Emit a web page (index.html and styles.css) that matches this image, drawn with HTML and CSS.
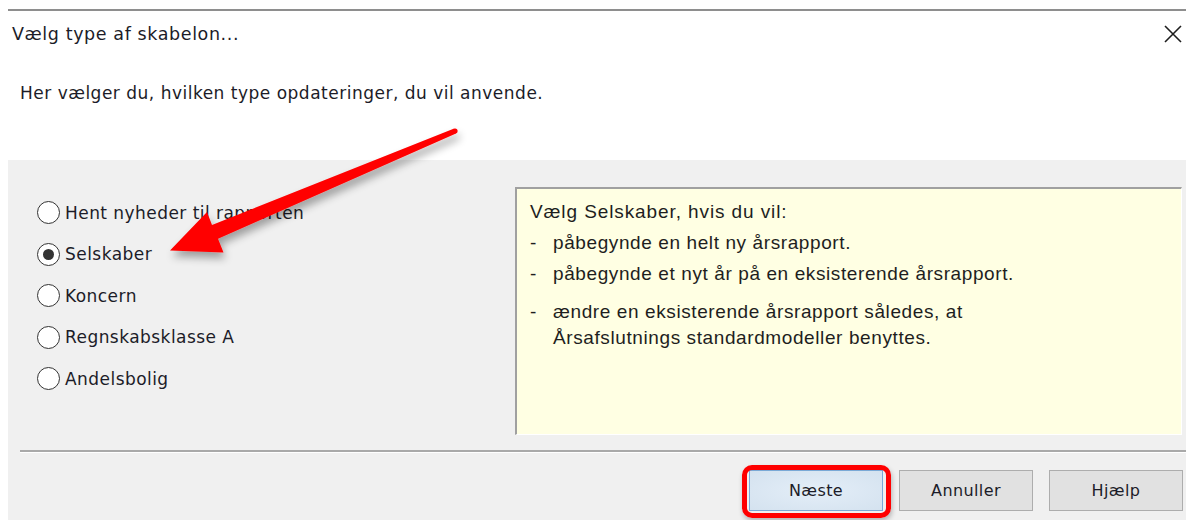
FILE: index.html
```html
<!DOCTYPE html>
<html lang="da">
<head>
<meta charset="utf-8">
<title>Vælg type af skabelon</title>
<link rel="stylesheet" href="styles.css">
</head>
<body>
<div class="dialog">
  <div class="titlebar">
    <span class="title">Vælg type af skabelon...</span>
    <svg class="close" width="20" height="20" viewBox="0 0 20 20" aria-hidden="true">
      <path d="M2 2 L18 18 M18 2 L2 18" stroke="#1e1e1e" stroke-width="1.6" fill="none"/>
    </svg>
  </div>
  <p class="intro">Her vælger du, hvilken type opdateringer, du vil anvende.</p>
  <div class="panel">
    <div class="content">
      <ul class="options">
        <li class="option"><span class="radio"></span><span class="label">Hent nyheder til rapporten</span></li>
        <li class="option"><span class="radio checked"></span><span class="label">Selskaber</span></li>
        <li class="option"><span class="radio"></span><span class="label">Koncern</span></li>
        <li class="option"><span class="radio"></span><span class="label">Regnskabsklasse A</span></li>
        <li class="option"><span class="radio"></span><span class="label">Andelsbolig</span></li>
      </ul>
      <div class="info">
        <p class="info-head">Vælg Selskaber, hvis du vil:</p>
        <ul class="info-list">
          <li class="info-item"><span class="dash">-</span><span>påbegynde en helt ny årsrapport.</span></li>
          <li class="info-item"><span class="dash">-</span><span>påbegynde et nyt år på en eksisterende årsrapport.</span></li>
          <li class="info-item last"><span class="dash">-</span><span>ændre en eksisterende årsrapport således, at<br>Årsafslutnings standardmodeller benyttes.</span></li>
        </ul>
      </div>
    </div>
    <div class="separator"></div>
    <div class="buttons">
      <span class="highlight-wrap">
        <button class="btn btn-default" type="button">Næste</button>
        <span class="highlight"></span>
      </span>
      <button class="btn" type="button">Annuller</button>
      <button class="btn" type="button">Hjælp</button>
    </div>
  </div>
</div>

<!-- callout arrow pointing at the selected option -->
<svg class="callout" width="1186" height="520" viewBox="0 0 1186 520" aria-hidden="true">
  <defs>
    <filter id="arrow-shadow" x="-20%" y="-20%" width="140%" height="160%">
      <feGaussianBlur in="SourceAlpha" stdDeviation="4"/>
      <feOffset dx="2" dy="6" result="blur"/>
      <feComponentTransfer><feFuncA type="linear" slope="0.35"/></feComponentTransfer>
      <feMerge><feMergeNode/><feMergeNode in="SourceGraphic"/></feMerge>
    </filter>
  </defs>
  <g filter="url(#arrow-shadow)" fill="#ff0000">
    <path d="M454.2 128.6 L212 225 L207 212 L170 250.5 L223.5 252.5 L218 238.8 L456 133.4 Z"/>
    <circle cx="455.1" cy="131" r="2.5"/>
  </g>
</svg>
</body>
</html>
```

FILE: styles.css
```css
html, body {
  margin: 0;
  padding: 0;
  background: #ffffff;
}

body {
  position: relative;
  width: 1186px;
  height: 520px;
  overflow: hidden;
  font-family: "DejaVu Sans", "Noto Sans", sans-serif;
  font-size: 17px;
  letter-spacing: 0.5px;
  color: #1c1c28;
}

.dialog {
  margin: 9px 0 0 8px;
}

.titlebar {
  display: flex;
  align-items: center;
  justify-content: space-between;
  height: 46px;
  padding: 0 3px 0 4px;
  border-top: 2px solid #8e8e8e;
}

.title {
  font-size: 17.5px;
  letter-spacing: 0.6px;
}

.close {
  display: block;
}

.intro {
  margin: 24px 0 0;
  padding-left: 12px;
  line-height: 24px;
  height: 24px;
  font-size: 17px;
  letter-spacing: 0.5px;
}

.panel {
  margin-top: 55px;
  height: 360px;
  background: #f0f0f0;
  display: flex;
  flex-direction: column;
}

.content {
  display: flex;
  padding-top: 27px;
}

.options {
  list-style: none;
  margin: 0;
  padding: 5px 0 0 29px;
  width: 478px;
}

.option {
  display: flex;
  align-items: center;
  height: 41.5px;
  font-size: 17px;
  letter-spacing: 0.45px;
}

.radio {
  box-sizing: border-box;
  width: 23px;
  height: 23px;
  border: 1.5px solid #333333;
  border-radius: 50%;
  background: #ffffff;
  margin-right: 5px;
  display: flex;
  align-items: center;
  justify-content: center;
}

.radio.checked::after {
  content: "";
  width: 11px;
  height: 11px;
  border-radius: 50%;
  background: #333333;
}

.info {
  box-sizing: border-box;
  width: 667px;
  height: 248px;
  background: #ffffe3;
  border-top: 2px solid #a0a0a0;
  border-left: 2px solid #a0a0a0;
  border-right: 1px solid #ffffff;
  border-bottom: 1px solid #ffffff;
  padding: 10px 0 0 13px;
  font-family: "Liberation Sans", Arial, sans-serif;
  font-size: 19px;
  letter-spacing: 0.6px;
  color: #1e1e1e;
}

.info-head {
  margin: 0;
  line-height: 26px;
  letter-spacing: 0.9px;
}

.info-list {
  list-style: none;
  margin: 0;
  padding: 0;
}

.info-item {
  display: flex;
  line-height: 26px;
  margin-top: 5px;
}

.info-item.last {
  margin-top: 12px;
}

.dash {
  width: 23px;
  flex: none;
}

.separator {
  margin: 15px 0 0 12px;
  border-top: 2px solid #a9a9a9;
  border-bottom: 1px solid #ffffff;
}

.buttons {
  display: flex;
  justify-content: flex-end;
  gap: 16px;
  padding: 17px 3px 0 0;
}

.btn {
  box-sizing: border-box;
  width: 134px;
  height: 41px;
  margin: 0;
  border: 1.5px solid #adadad;
  background: #e1e1e1;
  font-family: "DejaVu Sans", "Noto Sans", sans-serif;
  font-size: 16px;
  letter-spacing: 0.4px;
  color: #1c1c28;
  padding: 0;
}

.btn-default {
  background: radial-gradient(ellipse at center, #e4eef8 0%, #d4e2ef 100%);
  border-color: #7aa9d6;
}

.highlight-wrap {
  position: relative;
  display: block;
}

.highlight-wrap .btn {
  display: block;
}

.highlight {
  position: absolute;
  left: -7px;
  top: -5px;
  right: -8px;
  bottom: -7px;
  border: 5px solid #ff0000;
  border-radius: 10px;
  box-shadow: 1px 3px 5px rgba(0, 0, 0, 0.25);
  pointer-events: none;
}

.callout {
  position: absolute;
  left: 0;
  top: 0;
  pointer-events: none;
}
```
